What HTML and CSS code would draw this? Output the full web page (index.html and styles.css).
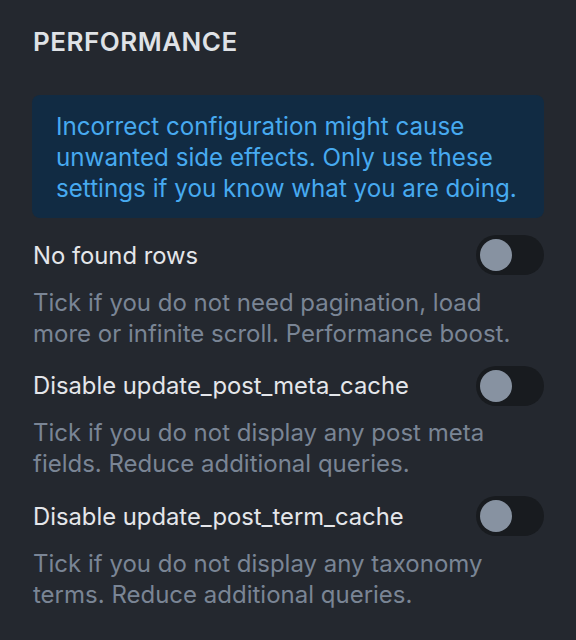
FILE: index.html
```html
<!DOCTYPE html>
<html>
<head>
<meta charset="utf-8">
<link rel="stylesheet" href="styles.css">
</head>
<body>
<div class="panel">
  <h2 class="title">PERFORMANCE</h2>
  <div class="notice">Incorrect configuration might cause unwanted side effects. Only use these settings if you know what you are doing.</div>
  <div class="setting">
    <div class="setting-head">
      <span class="label">No found rows</span>
      <span class="toggle"><span class="knob"></span></span>
    </div>
    <p class="desc">Tick if you do not need pagination, load more or infinite scroll. Performance boost.</p>
  </div>
  <div class="setting">
    <div class="setting-head">
      <span class="label">Disable update_post_meta_cache</span>
      <span class="toggle"><span class="knob"></span></span>
    </div>
    <p class="desc">Tick if you do not display any post meta fields. Reduce additional queries.</p>
  </div>
  <div class="setting">
    <div class="setting-head">
      <span class="label">Disable update_post_term_cache</span>
      <span class="toggle"><span class="knob"></span></span>
    </div>
    <p class="desc">Tick if you do not display any taxonomy terms. Reduce additional queries.</p>
  </div>
</div>
</body>
</html>
```
FILE: styles.css
```css
html, body {
  margin: 0;
  padding: 0;
  background: #24282f;
}
body {
  font-family: Inter, "Noto Sans", sans-serif;
  width: 576px;
  height: 640px;
  overflow: hidden;
}
.panel {
  padding: 26px 32px 0 33px;
  display: flex;
  flex-direction: column;
}
.title {
  margin: 0;
  font-size: 26px;
  font-weight: 600;
  letter-spacing: 0.5px;
  line-height: 32px;
  color: #dfe2e6;
}
.notice {
  margin-top: 37px;
  margin-left: -1px;
  background: #112b43;
  border-radius: 8px;
  padding: 16px 18px 14px 24px;
  color: #47aaf0;
  font-size: 24.2px;
  line-height: 31px;
}
.setting {
  margin-top: 17px;
  display: flex;
  flex-direction: column;
}
.setting-head {
  display: flex;
  align-items: center;
  justify-content: space-between;
  height: 40px;
}
.label {
  color: #e4e6ea;
  font-size: 23.8px;
}
.toggle {
  width: 68px;
  height: 40px;
  border-radius: 20px;
  background: #181b1f;
  display: flex;
  align-items: center;
  padding-left: 4px;
  box-sizing: border-box;
}
.knob {
  width: 32px;
  height: 32px;
  border-radius: 50%;
  background: #8792a1;
}
.desc {
  margin: 11.5px 0 0 0;
  color: #7a8595;
  font-size: 24px;
  line-height: 31px;
  max-width: 490px;
}
```
